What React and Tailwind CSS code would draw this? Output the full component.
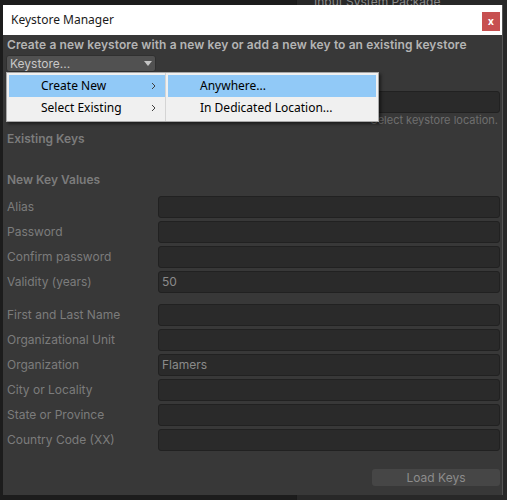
import React from 'react';

const rowsA = [
  { label: 'Alias', value: '' },
  { label: 'Password', value: '' },
  { label: 'Confirm password', value: '' },
  { label: 'Validity (years)', value: '50' },
];

const rowsB = [
  { label: 'First and Last Name', value: '' },
  { label: 'Organizational Unit', value: '' },
  { label: 'Organization', value: 'Flamers' },
  { label: 'City or Locality', value: '' },
  { label: 'State or Province', value: '' },
  { label: 'Country Code (XX)', value: '' },
];

const Field = ({ label, value }) => (
  <div className="flex items-center h-[22px]">
    <span className="w-[151px] shrink-0 text-[12px] text-[#7c7c7c]">{label}</span>
    <div className="flex-1 h-[22px] rounded-[3px] border border-[#212121] bg-[#2a2a2a] px-[3px] flex items-center text-[12px] text-[#8a8a8a]">
      {value}
    </div>
  </div>
);

const Chevron = () => (
  <svg width="6" height="8" viewBox="0 0 6 8" className="shrink-0">
    <path d="M1 1l3 3-3 3" fill="none" stroke="#404040" strokeWidth="1" />
  </svg>
);

const PopupMenu = () => (
  <div
    className="absolute left-[6px] top-[72px] flex bg-[#f0f0f0] border border-[#a8a8a8] shadow-[2px_2px_3px_rgba(0,0,0,0.5)] text-[12px] text-black"
    style={{ fontFamily: '"Noto Sans", "Open Sans", sans-serif' }}
  >
    <div className="w-[159px] py-[2px] pl-[2px] flex flex-col border-r border-[#d4d4d4]">
      <div className="h-[22px] flex items-center bg-[#91c9f7] pl-[32px] pr-[8px]">
        <span className="flex-1">Create New</span>
        <Chevron />
      </div>
      <div className="h-[22px] flex items-center pl-[32px] pr-[8px]">
        <span className="flex-1">Select Existing</span>
        <Chevron />
      </div>
    </div>
    <div className="w-[212px] p-[2px] flex flex-col">
      <div className="h-[22px] flex items-center bg-[#91c9f7] pl-[32px]">Anywhere...</div>
      <div className="h-[22px] flex items-center pl-[32px]">In Dedicated Location...</div>
    </div>
  </div>
);

export default function App() {
  return (
    <div
      className="relative w-[507px] h-[500px] overflow-hidden bg-[#1c1c1c] pt-[5px] pl-[3px]"
      style={{ fontFamily: 'Inter, "Noto Sans", sans-serif' }}
    >
      {/* editor panel behind the window */}
      <div className="absolute left-[296px] top-0 w-[211px] h-[500px] bg-[#282828] border-l border-[#1a1a1a]">
        <div className="absolute left-[17px] -top-[7px] text-[12px] text-[#8a8a8a]">Input System Package</div>
      </div>

      <div className="relative w-[500px] h-[490px] flex flex-col border-r border-[#555]">
        {/* title bar */}
        <div
          className="h-[30px] bg-white flex items-center justify-between pl-[8px] pr-[2px]"
          style={{ fontFamily: '"Noto Sans", "Open Sans", sans-serif' }}
        >
          <span className="text-[12px] text-[#1a1a1a]">Keystore Manager</span>
          <div className="w-[18px] h-[19px] bg-[#c75050] flex items-center justify-center text-white text-[10px] font-bold leading-none mt-[2px]">
            x
          </div>
        </div>

        {/* body */}
        <div className="flex-1 bg-[#383838] pl-[4px] pr-[2px] pb-[9px] flex flex-col">
          <div className="mt-[3px] h-[14px] flex items-center text-[12px] font-semibold text-[#b4b4b4] tracking-[0.1px] whitespace-nowrap">
            Create a new keystore with a new key or add a new key to an existing keystore
          </div>
          <div className="mt-[3px] ml-[-1px] w-[150px] h-[17px] rounded-[3px] bg-[#515151] border border-[#303030] flex items-center justify-between px-[3px] text-[12px] text-[#c8c8c8]">
            <span>Keystore...</span>
            <svg width="8" height="5" viewBox="0 0 8 5">
              <path d="M0 0h8L4 5z" fill="#c4c4c4" />
            </svg>
          </div>

          {/* keystore location field (mostly hidden by the menu) */}
          <div className="mt-[19px]">
            <Field label="" value="" />
          </div>
          <div className="h-[14px] text-right pr-[2px] text-[11px] leading-[14px] text-[#6f6f6f]">
            Select keystore location.
          </div>

          <div className="mt-[4px] h-[16px] flex items-center text-[12px] font-semibold text-[#7c7c7c]">Existing Keys</div>
          <div className="mt-[25px] h-[16px] flex items-center text-[12px] font-semibold text-[#7c7c7c]">New Key Values</div>

          <div className="mt-[8px] flex flex-col gap-[3px]">
            {rowsA.map((r) => (
              <Field key={r.label} {...r} />
            ))}
          </div>
          <div className="mt-[11px] flex flex-col gap-[3px]">
            {rowsB.map((r) => (
              <Field key={r.label} {...r} />
            ))}
          </div>

          <div className="mt-auto flex justify-end">
            <div className="w-[128px] h-[17px] rounded-[3px] bg-[#464646] flex items-center justify-center text-[12px] text-[#8c8c8c]">
              Load Keys
            </div>
          </div>
        </div>
      </div>

      <PopupMenu />
    </div>
  );
}
